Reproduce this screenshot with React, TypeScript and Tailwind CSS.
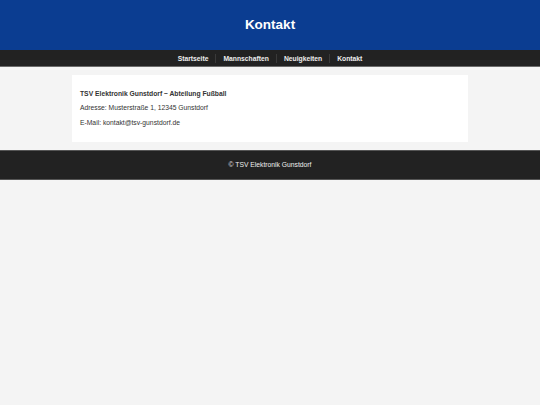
const links = ["Startseite", "Mannschaften", "Neuigkeiten", "Kontakt"];

export default function App() {
  return (
    <div className="min-h-[405px] bg-[#f4f4f4] font-['Liberation_Sans',Arial,sans-serif] text-[6.75px] text-[#333]">
      <header className="flex h-[50px] items-center justify-center bg-[#0b3d91] text-white">
        <h1 className="text-[13.5px] font-bold">Kontakt</h1>
      </header>

      <nav className="flex h-[17px] items-center justify-center border-b border-[#6b6b6b] bg-[#222]">
        {links.map((l, i) => (
          <a
            key={l}
            href="#"
            className={
              "px-[7px] leading-[9px] font-bold text-[#eee] " +
              (i > 0 ? "border-l border-[#3a3a3a]" : "")
            }
          >
            {l}
          </a>
        ))}
      </nav>

      <main className="mx-auto mt-[8px] flex w-[396px] flex-col gap-[3.5px] bg-white px-[8px] py-[14px] leading-[10.8px]">
        <p className="font-bold">TSV Elektronik Gunstdorf – Abteilung Fußball</p>
        <p>Adresse: Musterstraße 1, 12345 Gunstdorf</p>
        <p>E-Mail: kontakt@tsv-gunstdorf.de</p>
      </main>

      <footer className="mt-[8px] flex h-[30px] items-center justify-center border-y border-[#555] bg-[#222] text-[#eee]">
        <p>© TSV Elektronik Gunstdorf</p>
      </footer>
    </div>
  );
}
